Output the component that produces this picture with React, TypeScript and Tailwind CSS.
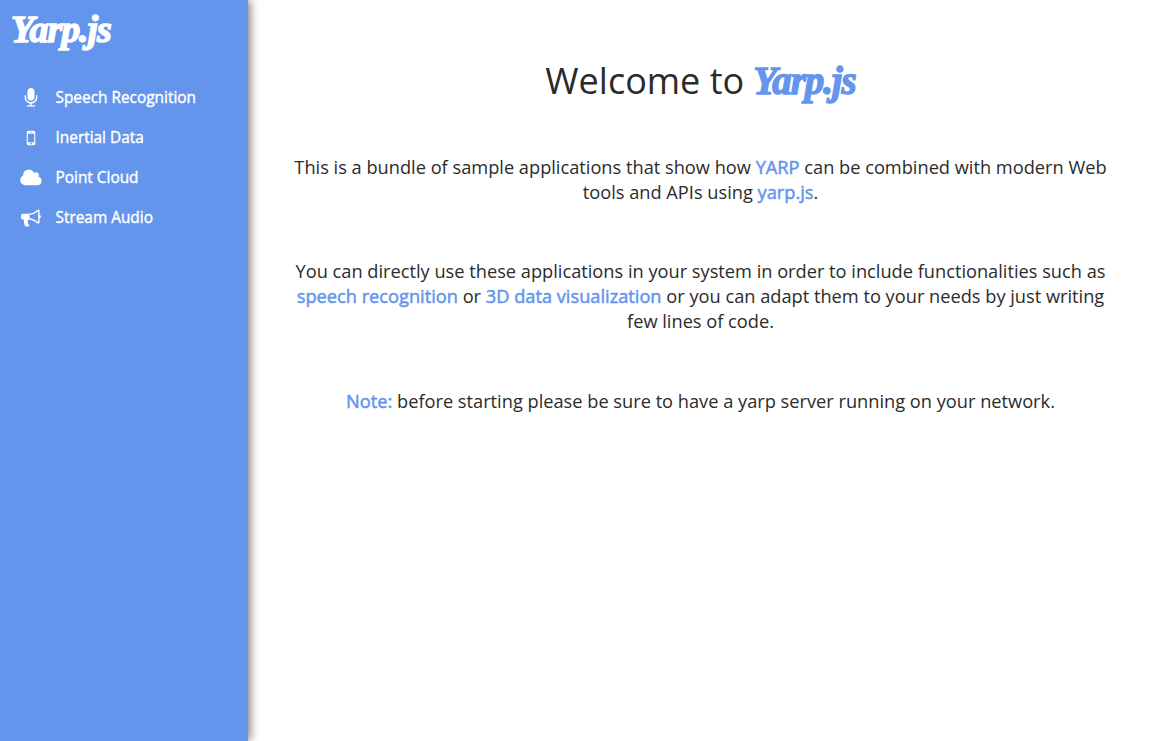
import type { ReactNode } from "react";

const items = [
  {
    label: "Speech Recognition",
    box: "0 0 1792 1792",
    d: "M1472 704v128q0 221-147.5 384.5t-364.5 187.5v132h256q26 0 45 19t19 45-19 45-45 19h-640q-26 0-45-19t-19-45 19-45 45-19h256v-132q-217-24-364.5-187.5t-147.5-384.5v-128q0-26 19-45t45-19 45 19 19 45v128q0 185 131.5 316.5t316.5 131.5 316.5-131.5 131.5-316.5v-128q0-26 19-45t45-19 45 19 19 45zm-256-384v512q0 132-94 226t-226 94-226-94-94-226v-512q0-132 94-226t226-94 226 94 94 226z",
  },
  {
    label: "Inertial Data",
    box: "0 0 1792 1792",
    d: "M976 1408q0-33-23.5-56.5t-56.5-23.5-56.5 23.5-23.5 56.5 23.5 56.5 56.5 23.5 56.5-23.5 23.5-56.5zm208-160v-704q0-13-9.5-22.5t-22.5-9.5h-512q-13 0-22.5 9.5t-9.5 22.5v704q0 13 9.5 22.5t22.5 9.5h512q13 0 22.5-9.5t9.5-22.5zm-192-848q0-16-16-16h-160q-16 0-16 16t16 16h160q16 0 16-16zm288-16v1024q0 52-38 90t-90 38h-512q-52 0-90-38t-38-90v-1024q0-52 38-90t90-38h512q52 0 90 38t38 90z",
  },
  {
    label: "Point Cloud",
    box: "0 0 2048 1792",
    d: "M1984 1152q0 159-112.5 271.5t-271.5 112.5h-1088q-185 0-316.5-131.5t-131.5-316.5q0-132 71-241.5t187-163.5q-2-28-2-43 0-212 150-362t362-150q158 0 286.5 88t187.5 230q70-62 166-62 106 0 181 75t75 181q0 75-41 138 129 30 213 134.5t84 239.5z",
  },
  {
    label: "Stream Audio",
    box: "0 0 1792 1792",
    d: "M1664 640q53 0 90.5 37.5t37.5 90.5-37.5 90.5-90.5 37.5v384q0 52-38 90t-90 38q-417-347-812-380-58 19-91 66t-31 100.5 40 92.5q-20 33-23 65.5t6 58 33.5 55 48 50 61.5 50.5q-29 58-111.5 83t-168.5 11.5-132-55.5q-7-23-29.5-87.5t-32-94.5-23-89-15-101 3.5-98.5 22-110.5h-122q-66 0-113-47t-47-113v-192q0-66 47-113t113-47h480q435 0 896-384 52 0 90 38t38 90v384zm-128 604v-954q-394 302-768 343v270q377 42 768 341z",
  },
];

function Mark({ children }: { children: ReactNode }) {
  return <span className="text-[#6495ed] [-webkit-text-stroke:0.5px_#6495ed]">{children}</span>;
}

export default function App() {
  return (
    <div className="flex h-[741px] bg-white font-['Open_Sans',sans-serif] text-[#2b2b2b]">
      <aside className="z-10 w-[248px] shrink-0 bg-[#6495ed] text-white shadow-[1px_0_10px_rgba(0,0,0,0.62)]">
        <h1 className="h-[78px] pl-[11px] pt-[7px] font-['Liberation_Serif',serif] text-[38px] leading-[44px] font-bold italic tracking-[-1.1px] [-webkit-text-stroke:1.4px_white]">
          Yarp.js
        </h1>
        <nav>
          {items.map((item) => (
            <a key={item.label} className="flex h-10 items-center pl-[19px]">
              <svg viewBox={item.box} className="h-5 w-6 fill-white">
                <path d={item.d} />
              </svg>
              <span className="ml-[12.5px] text-[15.4px] leading-5 [-webkit-text-stroke:0.4px_white]">{item.label}</span>
            </a>
          ))}
        </nav>
      </aside>
      <main className="flex-1 pl-[42px] pr-[39px] pt-[56px] text-center text-[18.23px] leading-[25px]">
        <h2 className="flex items-center justify-center gap-[9px] text-[36px] leading-[50px]">
          <span>Welcome to</span>
          <span className="font-['Liberation_Serif',serif] text-[39px] font-bold italic tracking-[-1.1px] text-[#6495ed] [-webkit-text-stroke:1.4px_#6495ed]">
            Yarp.js
          </span>
        </h2>
        <p className="mt-[49px]">
          This is a bundle of sample applications that show how <Mark>YARP</Mark> can be combined with modern Web
          <br />
          tools and APIs using <Mark>yarp.js</Mark>.
        </p>
        <p className="mt-[54px]">
          You can directly use these applications in your system in order to include functionalities such as
          <br />
          <Mark>speech recognition</Mark> or <Mark>3D data visualization</Mark> or you can adapt them to your needs by just writing
          <br />
          few lines of code.
        </p>
        <p className="mt-[55px]">
          <Mark>Note:</Mark> before starting please be sure to have a yarp server running on your network.
        </p>
      </main>
    </div>
  );
}
